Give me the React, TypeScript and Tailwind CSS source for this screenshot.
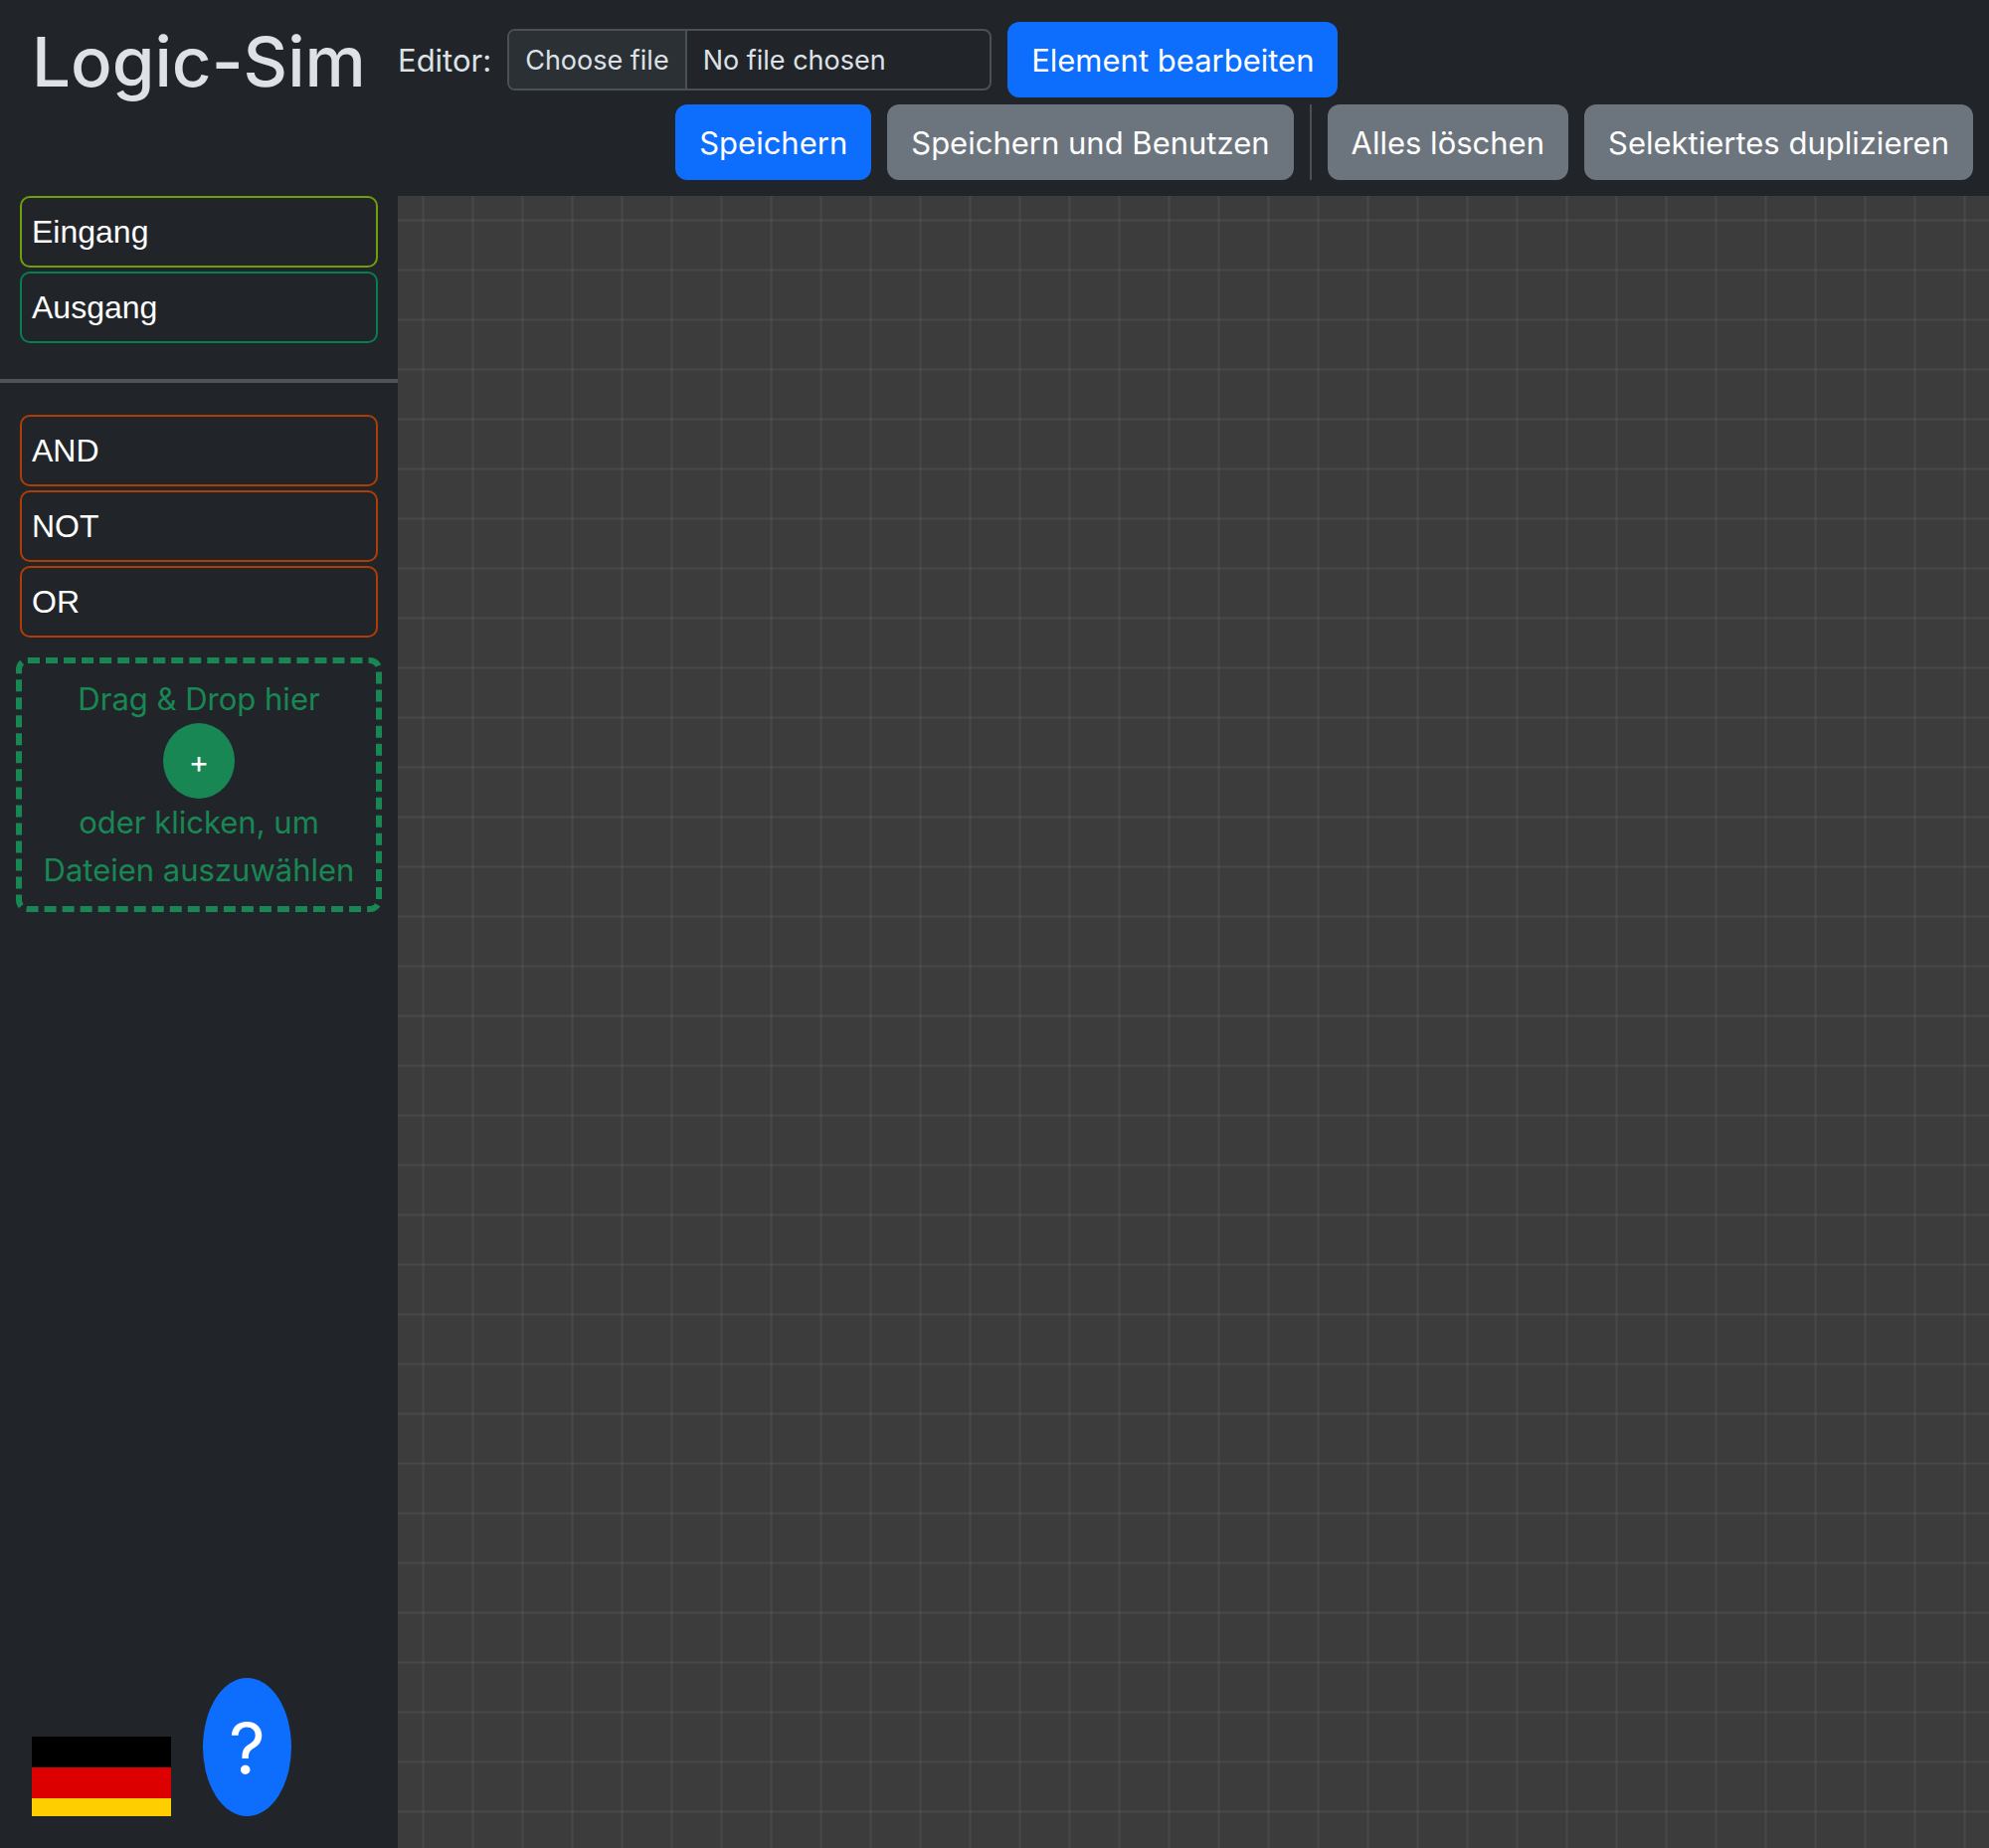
import type { ReactNode } from "react";

type Part = { name: string; border: string };

const terminals: Part[] = [
  { name: "Eingang", border: "border-[#6f9f0a]" },
  { name: "Ausgang", border: "border-[#067f4f]" },
];

const gates: Part[] = [
  { name: "AND", border: "border-[#b23c05]" },
  { name: "NOT", border: "border-[#b23c05]" },
  { name: "OR", border: "border-[#b23c05]" },
];

function ToolButton({ primary = false, children }: { primary?: boolean; children: ReactNode }) {
  return (
    <button
      type="button"
      className={
        primary
          ? "h-[76px] rounded-xl bg-[#0d6efd] px-6 pt-0.5 text-[31px] whitespace-nowrap text-white"
          : "h-[76px] rounded-xl bg-[#6c757d] px-6 pt-0.5 text-[31px] whitespace-nowrap text-white"
      }
    >
      {children}
    </button>
  );
}

function PartList({ parts, label }: { parts: Part[]; label: string }) {
  return (
    <ul aria-label={label} className="flex flex-col gap-1 px-5">
      {parts.map((part) => (
        <li
          key={part.name}
          draggable
          className={`flex h-[72px] cursor-grab items-center rounded-[10px] border-2 px-2.5 font-['Liberation_Sans',sans-serif] text-[32px] text-white ${part.border}`}
        >
          {part.name}
        </li>
      ))}
    </ul>
  );
}

function Header() {
  return (
    <header className="flex pt-[22px] pr-4 pb-4">
      <h1 className="w-[400px] shrink-0 pl-8 text-[69px] leading-[80px] font-medium whitespace-nowrap">Logic-Sim</h1>
      <div className="flex flex-1 flex-col gap-[7px]">
        <div className="flex items-center gap-4">
          <label htmlFor="element-file" className="pt-0.5 text-[31px]">
            Editor:
          </label>
          <label className="flex h-[62px] w-[487px] cursor-pointer items-stretch overflow-hidden rounded-lg border-2 border-[#495057] text-[27px]">
            <input id="element-file" type="file" className="sr-only" />
            <span className="flex items-center border-r-2 border-[#495057] bg-[#2b3035] px-4 pt-0.5">Choose file</span>
            <span className="flex items-center px-4 pt-0.5">No file chosen</span>
          </label>
          <ToolButton primary>Element bearbeiten</ToolButton>
        </div>
        <div className="flex gap-4 self-end">
          <ToolButton primary>Speichern</ToolButton>
          <ToolButton>Speichern und Benutzen</ToolButton>
          <div className="w-0.5 bg-[#4d5154]" />
          <ToolButton>Alles löschen</ToolButton>
          <ToolButton>Selektiertes duplizieren</ToolButton>
        </div>
      </div>
    </header>
  );
}

function DropZone() {
  return (
    <div className="mx-4 mt-5 flex flex-col items-center rounded-xl border-6 border-dashed border-[#198754] p-3 text-center text-[31px] leading-[48px] text-[#198754]">
      <p>Drag &amp; Drop hier</p>
      <button
        type="button"
        aria-label="Dateien hinzufügen"
        className="h-[76px] w-[72px] rounded-[50%] bg-[#198754] pt-0.5 text-white"
      >
        +
      </button>
      <p>
        oder klicken, um
        <br />
        Dateien auszuwählen
      </p>
    </div>
  );
}

function Sidebar() {
  return (
    <aside className="flex w-[400px] shrink-0 flex-col">
      <PartList parts={terminals} label="Anschlüsse" />
      <hr className="mt-9 mb-8 border-t-4 border-[#4f5256]" />
      <PartList parts={gates} label="Gatter" />
      <DropZone />
      <div className="mt-auto flex items-end gap-8 p-8">
        <button type="button" aria-label="Sprache: Deutsch">
          <svg viewBox="0 0 140 80" className="h-20 w-[140px]">
            <rect width="140" height="31" fill="#000000" />
            <rect y="31" width="140" height="31" fill="#dd0000" />
            <rect y="62" width="140" height="18" fill="#ffce00" />
          </svg>
        </button>
        <button
          type="button"
          aria-label="Hilfe"
          className="h-[139px] w-[89px] rounded-[50%] bg-[#0d6efd] pt-0.5 text-[72px] leading-none text-white"
        >
          ?
        </button>
      </div>
    </aside>
  );
}

export default function App() {
  return (
    <div className="flex min-h-screen flex-col bg-[#212529] font-[Inter,sans-serif] text-[#dee2e6]">
      <Header />
      <div className="flex flex-1">
        <Sidebar />
        <main
          aria-label="Schaltplan"
          className="flex-1 bg-[#3c3c3c] bg-[linear-gradient(to_right,transparent_24px,#ffffff08_24px,#ffffff08_25px,#ffffff0e_25px,#ffffff0e_26px,#ffffff08_26px,#ffffff08_27px,transparent_27px),linear-gradient(to_bottom,transparent_23px,#ffffff08_23px,#ffffff08_24px,#ffffff0e_24px,#ffffff0e_25px,#ffffff08_25px,#ffffff08_26px,transparent_26px)] bg-size-[50px_50px]"
        />
      </div>
    </div>
  );
}
